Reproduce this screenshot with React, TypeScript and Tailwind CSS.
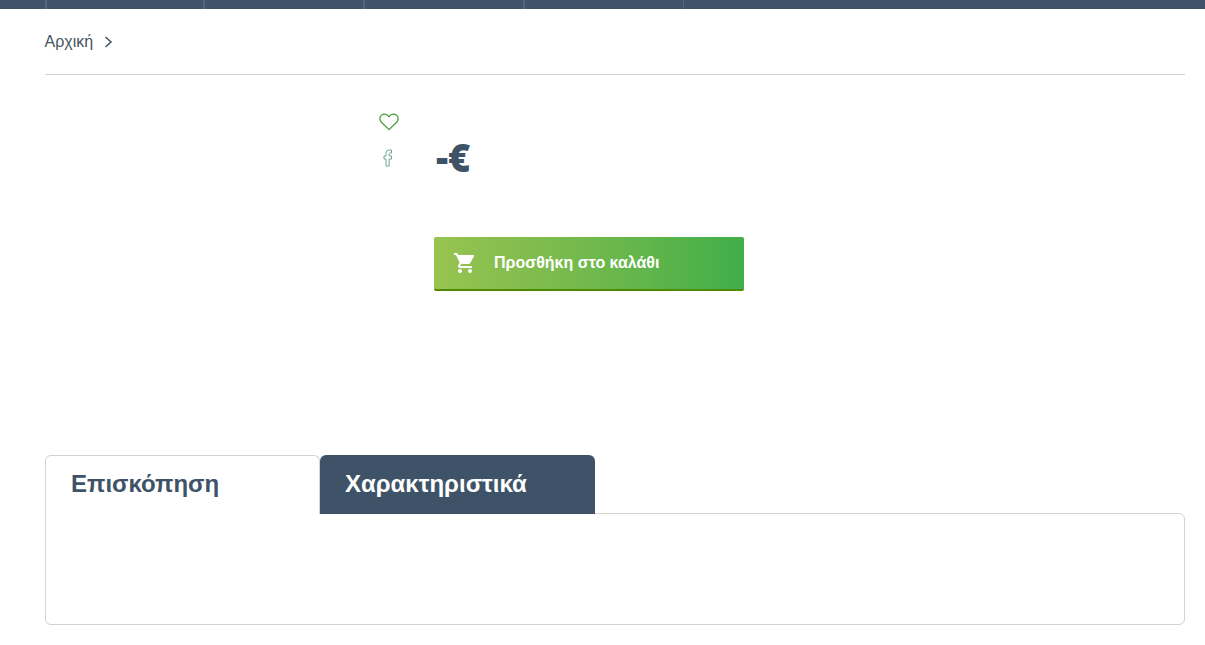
import React from "react";

const navSeparators = [158, 160, 160, 160];

const App = () => {
  return (
    <div className="min-h-[645px] bg-white font-['Liberation_Sans',Arial,sans-serif] text-[#3e5368]">
      {/* top nav, only the bottom edge is visible */}
      <div className="flex h-[9px] bg-[#3e5368] pl-[45px]">
        {navSeparators.map((w, i) => (
          <div key={i} className="h-full border-l-2 border-[#52667a]" style={{ width: w }} />
        ))}
        <div className="h-full w-px bg-[#52667a]" />
      </div>

      <div className="pl-[45px] pr-[20px]">
        <div className="flex h-[66px] items-center border-b border-[#d3d3d3]">
          <span className="ml-[-0.5px] mt-[1px] text-base leading-none text-[#45525e]">Αρχική</span>
          <svg width="9" height="12" viewBox="0 0 9 12" fill="none" className="ml-[11px] mt-[1px]">
            <path d="M1.5 1 L7 6 L1.5 11" stroke="#45525e" strokeWidth="1.5" />
          </svg>
        </div>

        <div className="flex h-[380px] pl-[334px] pt-[38px]">
          <div className="flex w-[55px] flex-col items-start">
            <svg width="20" height="18" viewBox="0 0 20 18" fill="none">
              <path
                d="M10 16.6 L2.4 9.2 C0.4 7.2 0.4 4.2 2.3 2.4 C4.2 0.6 7.3 0.7 9 2.6 L10 3.7 L11 2.6 C12.7 0.7 15.8 0.6 17.7 2.4 C19.6 4.2 19.6 7.2 17.6 9.2 Z"
                stroke="#4c9c3c"
                strokeWidth="1.3"
              />
            </svg>
            <svg width="10" height="18" viewBox="0 0 10 18" fill="none" className="ml-[4px] mt-[18px]">
              <path
                d="M3 17 V10 H1 V7 H3 V4.5 C3 2.3 4.3 1 6.3 1 H8.5 V4 H7.2 C6.5 4 6.2 4.4 6.2 5 V7 H8.5 V10 H6.2 V17 Z"
                stroke="#6aa98c"
                strokeWidth="1"
              />
            </svg>
          </div>

          <div className="flex flex-col">
            <div className="mt-[20px] h-[104px] pl-[2px] font-['Open_Sans',sans-serif] text-[38px] font-extrabold leading-[48px]">
              -€
            </div>
            <button
              type="button"
              className="flex h-[54px] w-[310px] items-center rounded-[2px] border-b-2 border-[#4d8a00] bg-gradient-to-r from-[#98c350] to-[#3fae49] pl-[19px] text-base font-bold text-white"
            >
              <svg width="24" height="24" viewBox="0 0 24 24" fill="#ffffff">
                <path d="M7 18c-1.1 0-2 .9-2 2s.9 2 2 2 2-.9 2-2-.9-2-2-2zM1 2v2h2l3.6 7.59-1.35 2.45c-.16.28-.25.61-.25.96 0 1.1.9 2 2 2h12v-2H7.42c-.14 0-.25-.11-.25-.25l.03-.12.9-1.63h7.45c.75 0 1.41-.41 1.75-1.03l3.58-6.49A1 1 0 0 0 20 4H5.21l-.94-2H1zm16 16c-1.1 0-2 .9-2 2s.9 2 2 2 2-.9 2-2-.9-2-2-2z" />
              </svg>
              <span className="ml-[17px]">Προσθήκη στο καλάθι</span>
            </button>
          </div>
        </div>

        <div className="flex">
          <div className="relative z-10 h-[59px] w-[275px] rounded-t-[6px] border border-b-0 border-[#d3d3d3] bg-white pl-[25px] pt-[13px] text-2xl font-bold leading-[30px]">
            Επισκόπηση
          </div>
          <div className="relative z-10 h-[59px] w-[275px] rounded-t-[6px] bg-[#3e5368] pl-[25px] pt-[14px] text-2xl font-bold leading-[30px] text-white">
            Χαρακτηριστικά
          </div>
        </div>
        <div className="-mt-px h-[112px] rounded-b-[6px] rounded-tr-[6px] border border-[#d3d3d3]" />
      </div>
    </div>
  );
};

export default App;
